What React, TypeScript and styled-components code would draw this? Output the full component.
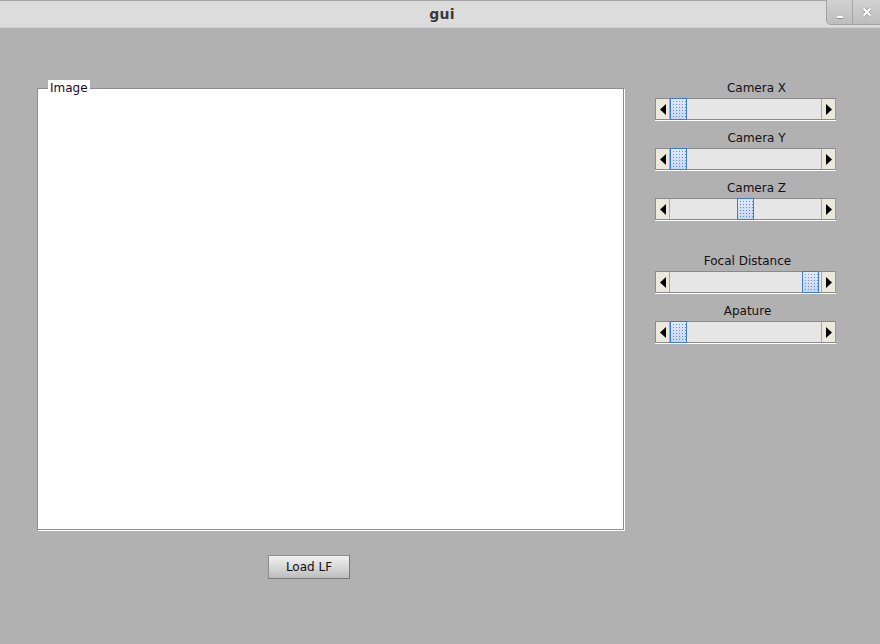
import React from "react";
import styled, { createGlobalStyle } from "styled-components";

const Global = createGlobalStyle`
  html, body { margin: 0; padding: 0; background: #b1b1b1; }
  * { box-sizing: border-box; }
`;

const Window = styled.div`
  width: 880px;
  height: 644px;
  background: #b1b1b1;
  display: flex;
  flex-direction: column;
  overflow: hidden;
  font-family: "DejaVu Sans", "Liberation Sans", sans-serif;
  font-size: 12px;
  color: #111;
`;

const TitleBar = styled.div`
  height: 28px;
  flex: none;
  display: flex;
  align-items: stretch;
  background: #dcdcdc;
  border-top: 1px solid #a4a4a4;
  border-bottom: 1px solid #d0d0d0;
`;

const TitleText = styled.div`
  flex: 1;
  display: flex;
  align-items: center;
  justify-content: center;
  padding-left: 58px;
  font-family: "DejaVu Sans", sans-serif;
  font-weight: bold;
  font-size: 14px;
  color: #3a3a3a;
  letter-spacing: 0.2px;
`;

const WinButtons = styled.div`
  display: flex;
  height: 25px;
  margin-top: -1px;
  border-left: 1px solid #a2a2a2;
  border-bottom: 1px solid #a2a2a2;
  border-bottom-left-radius: 5px;
  overflow: hidden;
`;

const WinButton = styled.div<{ $last?: boolean }>`
  width: ${(p) => (p.$last ? 27 : 26)}px;
  display: flex;
  align-items: center;
  justify-content: center;
  background: linear-gradient(#d2d2d2, #bdbdbd);
  border-right: ${(p) => (p.$last ? "none" : "1px solid #a6a6a6")};
`;

const Body = styled.div`
  flex: 1;
  display: flex;
  align-items: flex-start;
  padding-left: 37px;
  gap: 31px;
`;

const LeftColumn = styled.div`
  display: flex;
  flex-direction: column;
  padding-top: 60px;
`;

const Panel = styled.div`
  position: relative;
  width: 587px;
  height: 442px;
  background: #fff;
  border: 1px solid #8e8e8e;
  box-shadow: 1px 1px 0 #ffffff;
`;

const Legend = styled.span`
  position: absolute;
  left: 10px;
  top: -9px;
  padding: 0 2px 0 2px;
  background: #fff;
  line-height: 16px;
  color: #1c0a1c;
`;

const PushButton = styled.button`
  margin: 25px 0 0 231px;
  width: 82px;
  height: 24px;
  padding: 0 0 1px;
  font-family: "DejaVu Sans", "Liberation Sans", sans-serif;
  font-size: 12px;
  color: #111;
  background: linear-gradient(#f1f1f1, #d6d6d6 55%, #bcbcbc);
  border: 1px solid #8d8d8d;
  border-right-color: #7a7a7a;
  border-bottom-color: #7a7a7a;
  border-radius: 0;
`;

const RightColumn = styled.div`
  display: flex;
  flex-direction: column;
  width: 181px;
  padding-top: 51px;
`;

const SliderGroup = styled.div<{ $spaceBefore: number }>`
  display: flex;
  flex-direction: column;
  margin-top: ${(p) => p.$spaceBefore}px;
`;

const SliderLabel = styled.div<{ $shift: number }>`
  text-align: center;
  line-height: 18px;
  height: 19px;
  color: #141014;
  padding-left: ${(p) => 2 + p.$shift * 2}px;
`;

const Bar = styled.div`
  display: flex;
  height: 22px;
  width: 181px;
  border: 1px solid #8a8a8a;
  border-right-color: #9a9a9a;
  box-shadow: 0 1px 0 #ffffff;
`;

const ArrowButton = styled.div<{ $side: "left" | "right" }>`
  width: 14px;
  flex: none;
  display: flex;
  align-items: center;
  justify-content: center;
  background: #ebe9dc;
  ${(p) =>
    p.$side === "left"
      ? "border-right: 1px solid #a9a9a9;"
      : "border-left: 1px solid #a9a9a9;"}
`;

const Track = styled.div`
  flex: 1;
  position: relative;
  background: #e6e6e6;
`;

const Thumb = styled.div`
  position: absolute;
  top: -1px;
  bottom: -1px;
  width: 17px;
  border: 1px solid #3f7ad3;
  background-color: #d3e1f3;
  background-image: radial-gradient(circle, #6a8ecb 0.75px, transparent 1px),
    linear-gradient(#e0eaf7, #c5d6ee);
  background-size: 3px 3px, 100% 100%;
  background-position: 1px 1px, 0 0;
`;

const Triangle = ({ dir }: { dir: "left" | "right" }) => (
  <svg width="6" height="11" viewBox="0 0 6 11">
    {dir === "left" ? (
      <polygon points="6,0 6,11 0,5.5" fill="#000" />
    ) : (
      <polygon points="0,0 0,11 6,5.5" fill="#000" />
    )}
  </svg>
);

const Slider = ({ value }: { value: number }) => {
  const range = 150 - 17;
  return (
    <Bar>
      <ArrowButton $side="left">
        <Triangle dir="left" />
      </ArrowButton>
      <Track>
        <Thumb style={{ left: Math.min(Math.round(value * range), range - 1) }} />
      </Track>
      <ArrowButton $side="right">
        <Triangle dir="right" />
      </ArrowButton>
    </Bar>
  );
};

const sliders = [
  { label: "Camera X", value: 0, space: 0, shift: 10 },
  { label: "Camera Y", value: 0, space: 9, shift: 10 },
  { label: "Camera Z", value: 0.5, space: 9, shift: 10 },
  { label: "Focal Distance", value: 1, space: 32, shift: 1 },
  { label: "Apature", value: 0, space: 9, shift: 1 },
];

export default function App() {
  return (
    <>
      <Global />
      <Window>
        <TitleBar>
          <TitleText>gui</TitleText>
          <WinButtons>
            <WinButton>
              <svg width="8" height="26" viewBox="0 0 8 26">
                <rect x="1" y="17" width="6" height="3" fill="#8e8e8e" />
                <rect x="1" y="17" width="6" height="2" fill="#fff" />
              </svg>
            </WinButton>
            <WinButton $last>
              <svg width="10" height="10" viewBox="0 0 10 10">
                <path d="M1.5 1.5 L8.5 8.5 M8.5 1.5 L1.5 8.5" stroke="#9a9a9a" strokeWidth="3.2" />
                <path d="M1.5 1.5 L8.5 8.5 M8.5 1.5 L1.5 8.5" stroke="#fff" strokeWidth="2" />
              </svg>
            </WinButton>
          </WinButtons>
        </TitleBar>
        <Body>
          <LeftColumn>
            <Panel>
              <Legend>Image</Legend>
            </Panel>
            <PushButton>Load LF</PushButton>
          </LeftColumn>
          <RightColumn>
            {sliders.map((s) => (
              <SliderGroup key={s.label} $spaceBefore={s.space}>
                <SliderLabel $shift={s.shift}>{s.label}</SliderLabel>
                <Slider value={s.value} />
              </SliderGroup>
            ))}
          </RightColumn>
        </Body>
      </Window>
    </>
  );
}
